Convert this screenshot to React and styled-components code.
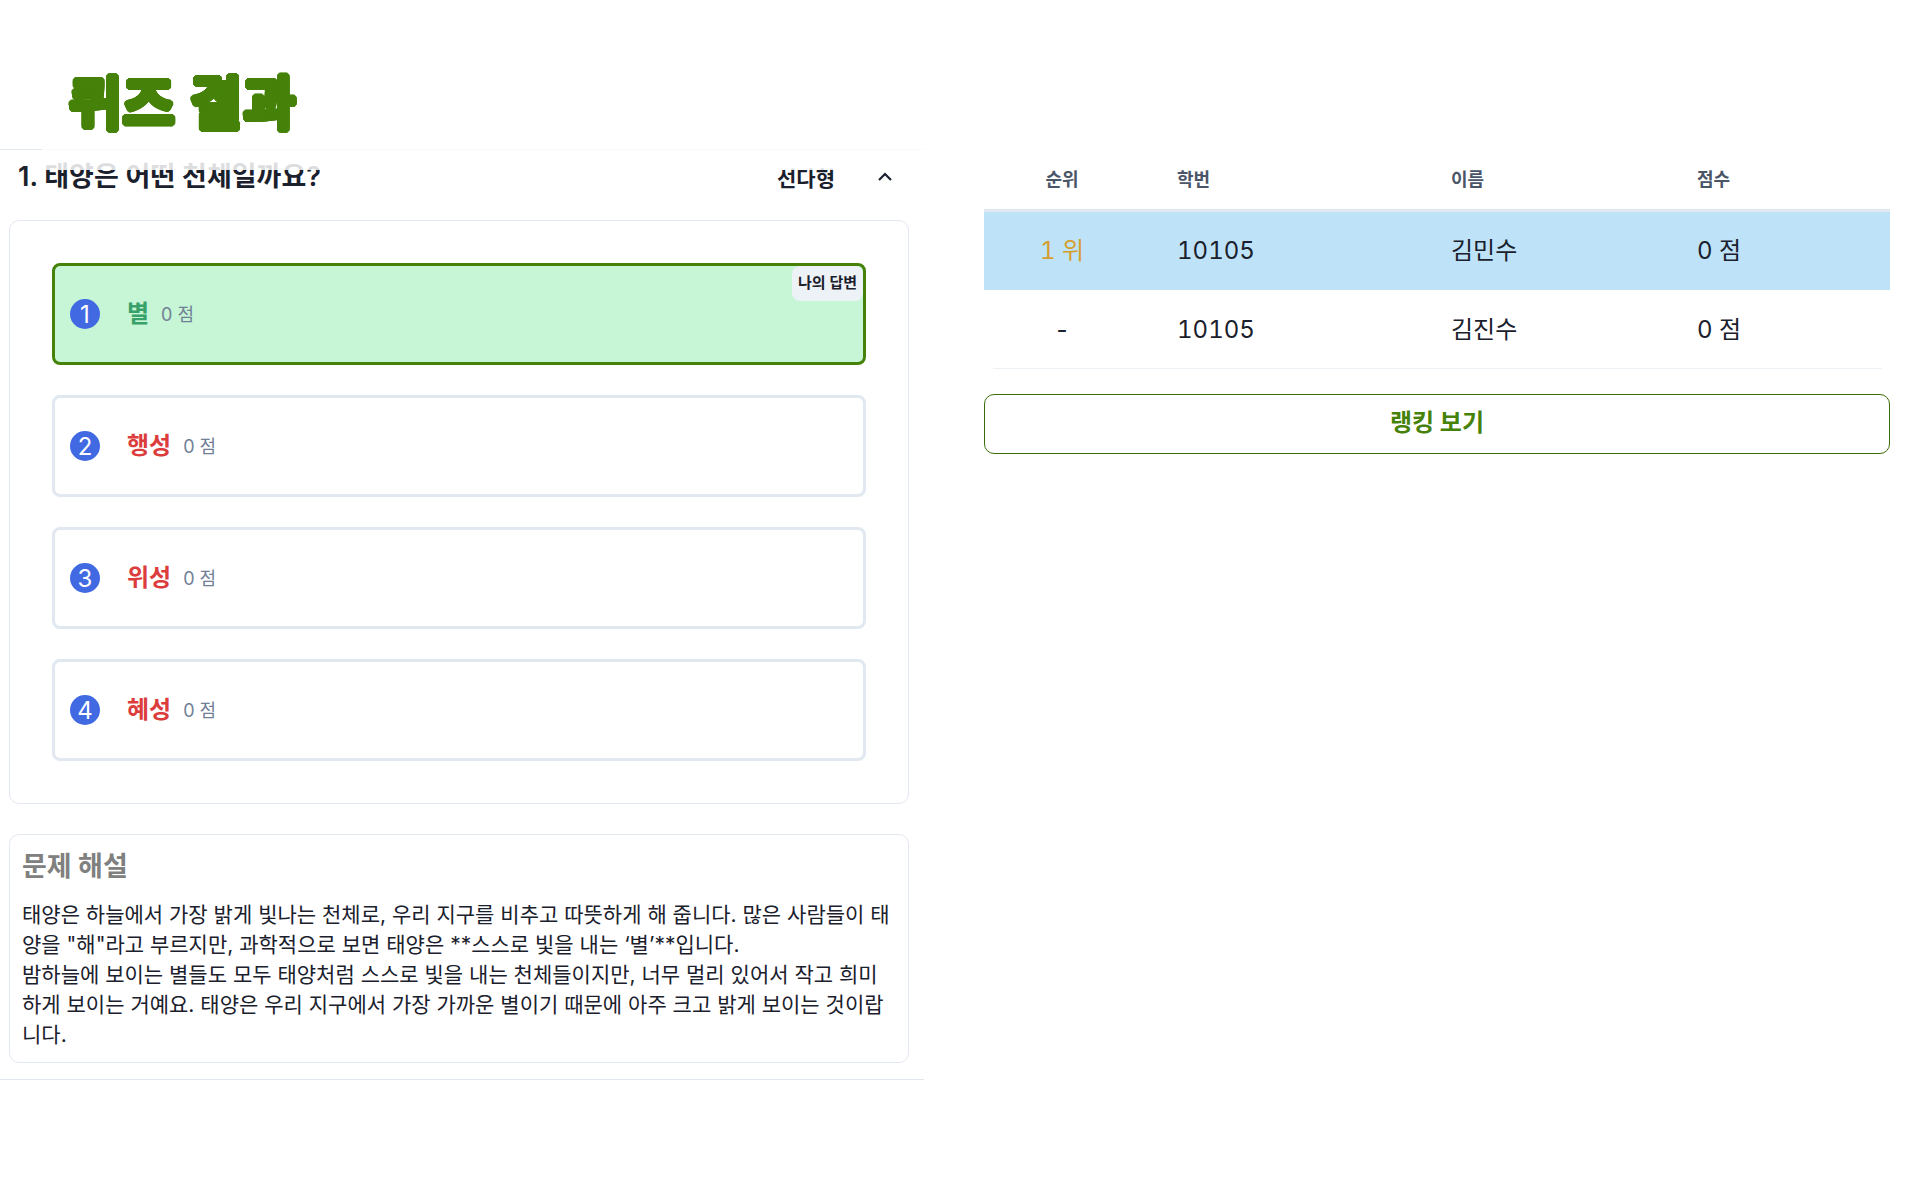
import React from "react";
import styled, { createGlobalStyle } from "styled-components";

const options = [
  { no: 1, label: "별", correct: true, mine: true },
  { no: 2, label: "행성" },
  { no: 3, label: "위성" },
  { no: 4, label: "혜성" },
];

const rows = [
  { rank: "1 위", id: "10105", name: "김민수", score: "0 점", top: true },
  { rank: "-", id: "10105", name: "김진수", score: "0 점" },
];

// 제목 글자 끝을 둥글게 보이게 하는 그림자
const roundGlow = Array.from({ length: 24 }, (_, i) => {
  const a = (i / 24) * Math.PI * 2;
  return `${(Math.cos(a) * 2.6).toFixed(2)}px ${(Math.sin(a) * 2.6).toFixed(2)}px 0 #46820a`;
}).join(", ");

const App = () => {
  return (
    <Page>
      <GlobalStyle />
      <Left>
        <Title>퀴즈 결과</Title>
        <QuestionArea>
          <Fade />
          <QuestionHead>
            <QuestionText>1. 태양은 어떤 천체일까요?</QuestionText>
            <QuestionType>선다형</QuestionType>
            <Chevron viewBox="0 0 16 10">
              <path d="M2 8 L8 2 L14 8" />
            </Chevron>
          </QuestionHead>
          <OptionCard>
            {options.map((option) => (
              <Option key={option.no} $mine={option.mine}>
                <NumberBadge>{option.no}</NumberBadge>
                <OptionLabel $correct={option.correct}>{option.label}</OptionLabel>
                <OptionScore>0 점</OptionScore>
                {option.mine && <MineTag>나의 답변</MineTag>}
              </Option>
            ))}
          </OptionCard>
          <Explain>
            <ExplainTitle>문제 해설</ExplainTitle>
            <ExplainText>
              태양은 하늘에서 가장 밝게 빛나는 천체로, 우리 지구를 비추고 따뜻하게 해 줍니다. 많은 사람들이 태양을 "해"라고 부르지만, 과학적으로 보면 태양은 **스스로 빛을 내는 ‘별’**입니다.
              <br />
              밤하늘에 보이는 별들도 모두 태양처럼 스스로 빛을 내는 천체들이지만, 너무 멀리 있어서 작고 희미하게 보이는 거예요. 태양은 우리 지구에서 가장 가까운 별이기 때문에 아주 크고 밝게 보이는 것이랍니다.
            </ExplainText>
          </Explain>
        </QuestionArea>
      </Left>
      <Right>
        <HeadRow>
          <HeadCell $center>순위</HeadCell>
          <HeadCell>학번</HeadCell>
          <HeadCell>이름</HeadCell>
          <HeadCell>점수</HeadCell>
        </HeadRow>
        {rows.map((row) => (
          <Row key={row.name} $top={row.top}>
            <Rank $top={row.top}>{row.rank}</Rank>
            <Cell>{row.id}</Cell>
            <Cell>{row.name}</Cell>
            <Cell>{row.score}</Cell>
          </Row>
        ))}
        <RankingButton>랭킹 보기</RankingButton>
      </Right>
    </Page>
  );
};

export default App;

const GlobalStyle = createGlobalStyle`
  body {
    margin: 0;
    background: #fff;
    font-family: Inter, "Noto Sans CJK KR", sans-serif;
    color: #1a202c;
  }
  * {
    box-sizing: border-box;
  }
`;

const Page = styled.div`
  display: flex;
  width: 1914px;
  height: 1193px;
  overflow: hidden;
`;

const Left = styled.div`
  width: 924px;
  flex-shrink: 0;
`;

const Title = styled.h1`
  margin: 0;
  height: 149px;
  padding: 60px 0 0 69px;
  font-family: "Noto Sans CJK KR", sans-serif;
  font-size: 57px;
  line-height: 78px;
  font-weight: 700;
  letter-spacing: 1px;
  color: #46820a;
  text-shadow: ${roundGlow};
`;

const QuestionArea = styled.div`
  position: relative;
  padding: 0 0 16px 9px;
  border-bottom: 1px solid #e2e8f0;
  width: 924px;
`;

const Fade = styled.div`
  position: absolute;
  top: 0;
  left: 42px;
  right: 0;
  height: 21px;
  background: rgba(255, 255, 255, 0.85);
  border-top: 1px solid #fafafa;
  z-index: 1;
  &::before {
    content: "";
    position: absolute;
    left: -42px;
    width: 42px;
    top: -1px;
    height: 1px;
    background: #e2e8f0;
  }
`;

const QuestionHead = styled.div`
  display: flex;
  align-items: center;
  height: 71px;
  padding: 0 31px 15px 9px;
`;

const QuestionText = styled.div`
  flex: 1;
  font-size: 27px;
  font-weight: 600;
  line-height: 54px;
`;

const QuestionType = styled.div`
  font-size: 21px;
  font-weight: 600;
  margin-right: 42px;
`;

const Chevron = styled.svg`
  width: 16px;
  height: 10px;
  fill: none;
  stroke: #1a202c;
  stroke-width: 2.2;
`;

const OptionCard = styled.div`
  width: 900px;
  display: flex;
  flex-direction: column;
  gap: 30px;
  padding: 42px;
  border: 1px solid #e2e8f0;
  border-radius: 10px;
`;

const Option = styled.div`
  position: relative;
  display: flex;
  align-items: center;
  height: 102px;
  padding: 0 15px;
  border: 3px solid ${(p) => (p.$mine ? "#46820a" : "#e2e8f0")};
  border-radius: 8px;
  background: ${(p) => (p.$mine ? "#c6f6d5" : "#fff")};
`;

const NumberBadge = styled.span`
  display: flex;
  align-items: center;
  justify-content: center;
  width: 30px;
  height: 30px;
  border-radius: 50%;
  background: #4169e1;
  color: #fff;
  font-size: 24px;
  line-height: 32px;
  padding-top: 1px;
`;

const OptionLabel = styled.span`
  margin-left: 27px;
  font-size: 24px;
  font-weight: 700;
  margin-bottom: 5px;
  color: ${(p) => (p.$correct ? "#38a169" : "#dc3c3c")};
`;

const OptionScore = styled.span`
  margin-left: 12px;
  font-size: 18px;
  margin-bottom: 2px;
  color: #718096;
`;

const MineTag = styled.span`
  position: absolute;
  top: 0;
  right: 0;
  height: 35px;
  padding: 5px 6px 0;
  border-radius: 8px;
  background: #edf2f7;
  font-size: 15px;
  font-weight: 600;
`;

const Explain = styled.div`
  width: 900px;
  margin-top: 30px;
  padding: 12px 12px 12px;
  border: 1px solid #e2e8f0;
  border-radius: 10px;
`;

const ExplainTitle = styled.h2`
  margin: 0 0 13px;
  font-size: 27px;
  line-height: 40px;
  font-weight: 700;
  color: #808080;
`;

const ExplainText = styled.p`
  margin: 0;
  font-size: 21px;
  line-height: 30px;
`;

const Right = styled.div`
  width: 906px;
  margin-left: 60px;
  padding-top: 149px;
`;

const columns = `
  display: grid;
  grid-template-columns: 193px 274px 246px 1fr;
  align-items: center;
`;

const HeadRow = styled.div`
  ${columns}
  height: 63px;
  padding-bottom: 2px;
  border-bottom: 3px solid #e2e8f0;
`;

const HeadCell = styled.div`
  font-size: 18px;
  font-weight: 600;
  color: #4a5568;
  ${(p) => p.$center && "width: 156px; text-align: center;"}
`;

const Row = styled.div`
  ${columns}
  position: relative;
  height: ${(p) => (p.$top ? "78px" : "79px")};
  background: ${(p) => (p.$top ? "#bee3f8" : "#fff")};
  ${(p) =>
    !p.$top &&
    `&::after {
      content: "";
      position: absolute;
      left: 9px;
      right: 8px;
      bottom: 0;
      height: 1px;
      background: #edf2f7;
    }`}
`;

const Cell = styled.div`
  font-size: 24px;
  line-height: 36px;
  height: 36px;
  font-variant-numeric: tabular-nums;
`;

const Rank = styled(Cell)`
  width: 156px;
  text-align: center;
  color: ${(p) => (p.$top ? "#d69e2e" : "#1a202c")};
`;

const RankingButton = styled.button`
  display: block;
  width: 100%;
  height: 60px;
  margin-top: 25px;
  padding: 0 0 8px;
  border: 1px solid #3a6e08;
  border-radius: 10px;
  background: #fff;
  color: #46820a;
  font-family: inherit;
  font-size: 24px;
  font-weight: 700;
`;
